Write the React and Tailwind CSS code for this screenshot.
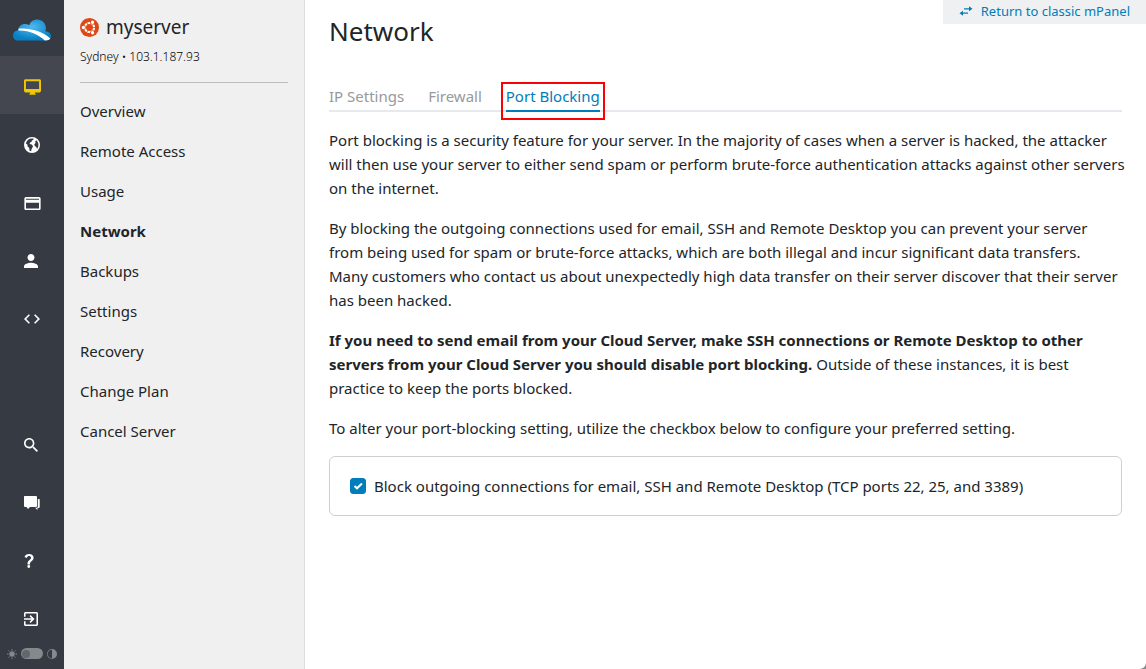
import React, { useState } from "react";
import { BsCircleHalf } from "react-icons/bs";

const mainNav = [
  {
    label: "Servers",
    viewBox: "1 2 22 20",
    width: 17,
    height: 16,
    path: "M21 2H3c-1.1 0-2 .9-2 2v13c0 1.1.9 2 2 2h6v1.500H8V22h8v-1.500h-1V19h6c1.100 0 2-.900 2-2V4c0-1.100-.900-2-2-2zm-.500 12.500h-17v-10h17v10z",
  },
  {
    label: "Domains",
    viewBox: "0 0 16 16",
    width: 16,
    height: 16,
    path: "M8 0a8 8 0 1 0 0 16A8 8 0 0 0 8 0zM9.500 1.600L9.200 3 7.800 3.600 7.500 5 6 5.600 5.600 7l2.200.500L9 9.200 8.200 11 7.400 12.500 7.200 14.300C6.600 14.200 6 14 5.500 13.800L5.300 11 3.600 9.500 3.400 7.500 1.900 6.500C2.500 3.600 5 1.600 8 1.600zM12.300 3.200C13.700 4.500 14.500 6.200 14.400 8c0 1.500-.500 2.800-1.300 3.900L12.300 10l-1.500-1-.500-1.800 1.300-1.200L11.200 4.500z",
  },
  {
    label: "Billing",
    viewBox: "2 4 20 16",
    width: 17,
    height: 13,
    path: "M20 4H4c-1.11 0-1.99.89-1.99 2L2 18c0 1.11.89 2 2 2h16c1.11 0 2-.89 2-2V6c0-1.11-.89-2-2-2zm0 14H4v-7h16v7zm0-10.500H4V6h16v1.500z",
  },
  {
    label: "Account",
    viewBox: "4 4 16 16",
    width: 14,
    height: 14,
    path: "M12 12c2.21 0 4-1.79 4-4s-1.79-4-4-4-4 1.79-4 4 1.79 4 4 4zm0 2c-2.67 0-8 1.34-8 4v2h16v-2c0-2.66-5.33-4-8-4z",
  },
  {
    label: "API",
    viewBox: "2 6 20 12",
    width: 16,
    height: 10,
    path: "M9.4 16.6L4.8 12l4.6-4.6L8 6l-6 6 6 6 1.4-1.4zm5.2 0l4.6-4.6-4.6-4.6L16 6l6 6-6 6-1.4-1.4z",
  },
];

const footerNav = [
  {
    label: "Search",
    viewBox: "3 3 17.5 17.5",
    width: 14,
    height: 14,
    path: "M15.5 14h-.79l-.28-.27C15.41 12.59 16 11.11 16 9.5 16 5.91 13.09 3 9.5 3S3 5.91 3 9.5 5.91 16 9.5 16c1.61 0 3.09-.59 4.23-1.57l.27.28v.79l5 4.99L20.49 19l-4.99-5zm-6 0C7.01 14 5 11.99 5 9.5S7.01 5 9.5 5 14 7.01 14 9.5 11.99 14 9.5 14z",
  },
  {
    label: "Support",
    viewBox: "0 0 16 14",
    width: 16,
    height: 14,
    path: "M.500 0h11.500a1 1 0 0 1 1 1v9a1 1 0 0 1-1 1H6l-2 2-1.500-2H1a1 1 0 0 1-1-1V.500zM13.800 3H15a.700.700 0 0 1 .700.700V11a1 1 0 0 1-1 1H13.500v2l-2.500-2.200h1.800a1 1 0 0 0 1-1z",
  },
  {
    label: "Help",
    viewBox: "6.500 4 11 16.500",
    width: 10,
    height: 14,
    path: "M13.250 16.300h-3v-1c0-2.300 1-3.200 2.300-4.300 1-.800 1.800-1.400 1.800-2.500 0-1.200-.900-2-2.200-2-1.300 0-2.300.800-2.600 2.200L6.700 7.600C7.400 5.300 9.300 4 12.100 4c3.100 0 5.300 1.700 5.300 4.400 0 2-1.100 3-2.400 4-1.200.900-1.750 1.500-1.750 2.800zM11.750 17a1.700 1.700 0 1 0 0 3.400 1.700 1.700 0 0 0 0-3.400z",
  },
  {
    label: "Log out",
    viewBox: "3 3 18 18",
    width: 14,
    height: 14,
    path: "M10.09 15.59L11.500 17l5-5-5-5-1.410 1.410L12.670 11H3v2h9.670l-2.580 2.590zM19 3H5c-1.110 0-2 .900-2 2v4h2V5h14v14H5v-4H3v4c0 1.100.890 2 2 2h14c1.100 0 2-.900 2-2V5c0-1.100-.900-2-2-2z",
  },
];

const serverMenu = [
  "Overview",
  "Remote Access",
  "Usage",
  "Network",
  "Backups",
  "Settings",
  "Recovery",
  "Change Plan",
  "Cancel Server",
];

const tabs = ["IP Settings", "Firewall", "Port Blocking"];

const App = () => {
  const [activeTab, setActiveTab] = useState("Port Blocking");
  const [blocked, setBlocked] = useState(true);
  const [dark, setDark] = useState(false);

  return (
    <div className="flex min-h-screen bg-white font-['Noto_Sans','Open_Sans',sans-serif] text-[15px] leading-6 text-[#212529]">
      {/* Icon rail */}
      <nav className="flex w-16 shrink-0 flex-col bg-[#363a42]">
        <a href="#home" aria-label="Home" className="flex h-14 items-center pt-1 pl-3">
          <CloudLogo />
        </a>
        {mainNav.map((item, i) => (
          <RailLink key={item.label} item={item} active={i === 0} />
        ))}
        <div className="mt-auto">
          {footerNav.map((item) => (
            <RailLink key={item.label} item={item} />
          ))}
        </div>
        <div className="flex h-[23px] items-center justify-center gap-1 pb-2 text-[#85888c]">
          <SunIcon />
          <button
            type="button"
            role="switch"
            aria-checked={dark}
            aria-label="Dark mode"
            onClick={() => setDark(!dark)}
            className={`flex h-[11px] w-[22px] items-center rounded-full bg-[#85888c] px-px ${
              dark ? "justify-end" : ""
            }`}
          >
            <span className="size-2 rounded-full bg-[#63676c]" />
          </button>
          <BsCircleHalf className="size-[10px] rotate-180" />
        </div>
      </nav>

      {/* Server menu */}
      <aside className="w-[241px] shrink-0 border-r border-[#dcdcdc] bg-[#f0f0f0] px-4 pt-[11px]">
        <div className="flex h-8 items-center gap-[7px]">
          <UbuntuLogo />
          <span className="text-[19px]">myserver</span>
        </div>
        <p className="mt-[2px] border-b border-[#bdbdbd] pb-[13px] text-[12px] font-light text-black">
          Sydney • 103.1.187.93
        </p>
        <ul className="mt-2">
          {serverMenu.map((name) => (
            <li key={name}>
              <a
                href={`#${name.toLowerCase().replace(" ", "-")}`}
                className={`block py-2 ${name === "Network" ? "font-bold" : ""}`}
              >
                {name}
              </a>
            </li>
          ))}
        </ul>
      </aside>

      <main className="min-w-0 flex-1">
        <div className="flex items-start justify-between pl-6">
          <h1 className="pt-[11px] text-[26px] leading-10">Network</h1>
          <a
            href="#classic"
            className="flex h-6 items-center gap-2 bg-[#eff0f1] px-4 pb-[2px] text-[13px] text-[#007dba]"
          >
            <SwapIcon />
            Return to classic mPanel
          </a>
        </div>

        <div className="px-6">
          <div role="tablist" className="mt-[33px] flex gap-6 border-b-2 border-[#e6eaee]">
            {tabs.map((tab) => (
              <Tab
                key={tab}
                name={tab}
                active={tab === activeTab}
                marked={tab === "Port Blocking"}
                onSelect={setActiveTab}
              />
            ))}
          </div>

          <div className="mt-4 space-y-4">
            <p className="-mr-2">
              Port blocking is a security feature for your server. In the majority of cases
              when a server is hacked, the attacker will then use your server to either send
              spam or perform brute-force authentication attacks against other servers on the
              internet.
            </p>
            <p>
              By blocking the outgoing connections used for email, SSH and Remote Desktop you
              can prevent your server from being used for spam or brute-force attacks, which
              are both illegal and incur significant data transfers. Many customers who contact
              us about unexpectedly high data transfer on their server discover that their
              server has been hacked.
            </p>
            <p>
              <strong className="font-bold">
                If you need to send email from your Cloud Server, make SSH connections or
                Remote Desktop to other servers from your Cloud Server you should disable port
                blocking.
              </strong>{" "}
              Outside of these instances, it is best practice to keep the ports blocked.
            </p>
            <p>
              To alter your port-blocking setting, utilize the checkbox below to configure your
              preferred setting.
            </p>
            <div className="rounded-md border border-[#cfcfd1] px-5 py-[17px]">
              <label className="flex items-center gap-2">
                <span className="relative flex size-4 shrink-0">
                  <input
                    type="checkbox"
                    checked={blocked}
                    onChange={(e) => setBlocked(e.target.checked)}
                    className="size-4 appearance-none rounded-[3px] border border-[#007dba] checked:bg-[#007dba]"
                  />
                  {blocked && (
                    <svg
                      viewBox="0 0 16 16"
                      className="pointer-events-none absolute inset-0 size-4 fill-none stroke-white stroke-2"
                    >
                      <path d="M4.500 8l2.500 2.300L12 5.500" />
                    </svg>
                  )}
                </span>
                Block outgoing connections for email, SSH and Remote Desktop (TCP ports 22, 25,
                and 3389)
              </label>
            </div>
          </div>
        </div>
      </main>

      {/* Window corner */}
      <svg viewBox="0 0 6 6" className="fixed right-0 bottom-0 size-[6px] fill-[#8a8a8a]">
        <path d="M6 0v6H0c3.500-.500 5.500-2.500 6-6z" />
      </svg>
    </div>
  );
};

/* ---------------- Components ---------------- */
const RailLink = ({ item, active }) => (
  <a
    href={`#${item.label.toLowerCase().replace(" ", "-")}`}
    aria-label={item.label}
    className={`flex h-[58px] items-center pt-1 pl-6 ${
      active ? "bg-[#44474f] text-[#f0c800]" : "text-white"
    }`}
  >
    <svg
      viewBox={item.viewBox}
      width={item.width}
      height={item.height}
      fill="currentColor"
      fillRule="evenodd"
    >
      <path d={item.path} />
    </svg>
  </a>
);

const Tab = ({ name, active, marked, onSelect }) => (
  <div className="relative -mb-[2px]">
    <button
      type="button"
      role="tab"
      aria-selected={active}
      onClick={() => onSelect(name)}
      className={`block border-b-2 pb-[2px] ${
        active ? "border-[#007dba] text-[#007dba]" : "border-transparent text-[#98999b]"
      }`}
    >
      {name}
    </button>
    {marked && (
      <span className="pointer-events-none absolute -inset-x-[5px] -top-[2px] -bottom-2 border-2 border-[#fb0007]" />
    )}
  </div>
);

const CloudLogo = () => (
  <svg viewBox="0 0 38 22" className="h-[22px] w-10">
    <defs>
      <radialGradient id="cloud" cx="0.5" cy="0.35" r="0.6">
        <stop offset="0" stopColor="#4fb9ee" />
        <stop offset="1" stopColor="#0880c4" />
      </radialGradient>
    </defs>
    <path
      d="M5 21.500c-3 0-5-2.200-5-5 0-2.900 2.200-4.900 5-5C5.400 7.500 8.300 5 12 5c1.600 0 3 .400 4.200 1.200C17.400 2.600 20.600.500 24.200.500c5 0 8.700 3.800 8.700 8.500 0 1.100-.200 2.200-.600 3.200 3.300.200 5.700 2.200 5.700 4.900 0 2.600-1.800 4.400-4.200 4.400z"
      fill="url(#cloud)"
    />
    <path
      d="M5.500 9.800c9.500-1.300 24.500 2.300 31.800 9.700-.800 1.300-2 2-5.500 2C26 16 17 11.300 5.500 11.500z"
      fill="#fff"
    />
  </svg>
);

const UbuntuLogo = () => (
  <svg viewBox="0 0 100 100" className="size-[19px]">
    <circle cx="50" cy="50" r="50" fill="#dd4814" />
    <circle cx="50" cy="50" r="24" fill="none" stroke="#fff" strokeWidth="11" />
    {[60, 180, 300].map((angle) => (
      <g key={angle} transform={`rotate(${angle} 50 50)`}>
        <path d="M50 50H100" stroke="#dd4814" strokeWidth="4" transform="rotate(60 50 50)" />
        <circle cx="82" cy="50" r="13" fill="#dd4814" />
        <circle cx="82" cy="50" r="9" fill="#fff" />
      </g>
    ))}
  </svg>
);

const SwapIcon = () => (
  <svg viewBox="0 0 14 10" className="h-[10px] w-[14px] fill-current">
    <path d="M10 .300L13.500 2.800 10 5.300V3.400H5V2.200h5zM4 4.700v1.900h5v1.200H4v1.900L.500 7.200z" />
  </svg>
);

const SunIcon = () => (
  <svg viewBox="0 0 20 20" className="size-[10px] fill-current stroke-current">
    <circle cx="10" cy="10" r="5" />
    <path
      d="M10 0v3M10 17v3M0 10h3M17 10h3M3 3l2 2M15 15l2 2M17 3l-2 2M5 15l-2 2"
      strokeWidth="2"
    />
  </svg>
);

export default App;
